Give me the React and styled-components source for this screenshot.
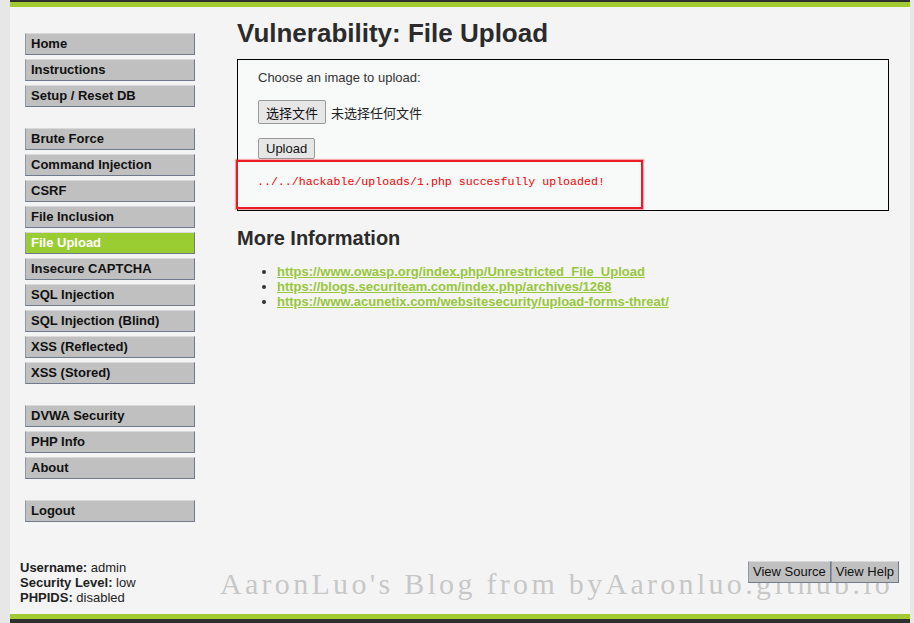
import React from 'react'
import styled, { createGlobalStyle } from 'styled-components'

const GlobalStyle = createGlobalStyle`
  html, body {
    margin: 0;
    padding: 0;
    background: #e7e7e7;
  }
  body {
    font-family: 'Liberation Sans', Arial, sans-serif;
    font-size: 13px;
    color: #000;
  }
`;

const Page = styled.div`
  width: 900px;
  height: 623px;
  margin-left: 10px;
  background: #f4f4f4;
  display: flex;
  flex-direction: column;
  position: relative;
`;

const Header = styled.div`
  height: 2px;
  background: #2f2f2f;
  border-bottom: 5px solid #a2cb33;
`;

const Footer = styled.div`
  height: 4px;
  background: #2f2f2f;
  border-top: 5px solid #a2cb33;
`;

const Body = styled.div`
  flex: 1;
  display: flex;
`;

const Sidebar = styled.div`
  width: 170px;
  padding: 26px 0 0 15px;
  display: flex;
  flex-direction: column;
`;

const MenuGroup = styled.div`
  display: flex;
  flex-direction: column;
  gap: 4px;
  margin-bottom: 21px;
`;

const MenuItem = styled.div`
  height: 20px;
  line-height: 20px;
  padding-left: 5px;
  background: ${p => (p.$active ? '#9acd32' : '#c0c0c0')};
  color: ${p => (p.$active ? '#fff' : '#111')};
  font-weight: bold;
  font-size: 13px;
  border: 1px solid;
  border-color: #d9d9d9 #6f7a8c #6f7a8c #8f98a8;
`;

const Main = styled.div`
  flex: 1;
  padding: 11px 21px 0 42px;
`;

const Title = styled.h1`
  margin: 0 0 11px;
  font-size: 26px;
  line-height: 30px;
  font-weight: bold;
  color: #2b2b2b;
`;

const Box = styled.div`
  position: relative;
  height: 140px;
  border: 1px solid #000;
  background: #f8f9f9;
  padding: 10px 20px 0;
`;

const Label = styled.div`
  font-size: 13px;
  line-height: 15px;
  color: #333;
`;

const FileRow = styled.div`
  display: flex;
  align-items: center;
  gap: 5px;
  margin-top: 15px;
  font-family: 'Liberation Sans', 'Noto Sans CJK SC', sans-serif;
  font-size: 13px;
  color: #222;
`;

const FormButton = styled.div`
  height: ${p => p.$h}px;
  padding: 0 ${p => p.$px}px;
  display: flex;
  align-items: center;
  background: #e6e6e6;
  border: 1px solid #9a9a9a;
  border-radius: 2px;
  color: #111;
  font-family: 'Liberation Sans', 'Noto Sans CJK SC', sans-serif;
  font-size: 13px;
`;

const UploadRow = styled.div`
  display: flex;
  margin-top: 14px;
`;

const Message = styled.pre`
  margin: 15px 0 0 -1px;
  font-family: 'Liberation Mono', monospace;
  font-size: 11.6px;
  line-height: 15px;
  color: #f00000;
`;

const Annotation = styled.div`
  position: absolute;
  left: -2px;
  top: 100px;
  width: 403px;
  height: 45px;
  border: 2px solid #ec1c24;
  box-shadow: 0 0 1px 1px rgba(236, 28, 36, 0.35);
`;

const SubTitle = styled.h2`
  margin: 15px 0 0;
  font-size: 20px;
  line-height: 24px;
  font-weight: bold;
  color: #2b2b2b;
`;

const LinkList = styled.ul`
  margin: 14px 0 0;
  padding-left: 40px;
  font-size: 13px;
  line-height: 15px;
  color: #333;
`;

const Link = styled.a`
  color: #98c73c;
  font-weight: bold;
  text-decoration: underline;
`;

const Bottom = styled.div`
  display: flex;
  justify-content: space-between;
  align-items: flex-start;
  padding: 0 11px 9px 10px;
`;

const UserInfo = styled.div`
  font-size: 13px;
  line-height: 15px;
  color: #222;
  b { font-weight: bold; }
`;

const HelpButtons = styled.div`
  display: flex;
  margin-top: 1px;
  position: relative;
  z-index: 2;
`;

const HelpButton = styled.div`
  height: 20px;
  line-height: 20px;
  padding: 0 4px;
  background: #c0c0c0;
  border: 1px solid;
  border-color: #d9d9d9 #6f7a8c #6f7a8c #8f98a8;
  font-size: 13px;
  color: #111;
`;

const Watermark = styled.div`
  position: absolute;
  left: 210px;
  top: 567px;
  font-family: 'Liberation Serif', serif;
  font-size: 30px;
  letter-spacing: 3.3px;
  color: rgba(160, 160, 160, 0.55);
  white-space: nowrap;
  z-index: 1;
  pointer-events: none;
`;

const menuGroups = [
  ['Home', 'Instructions', 'Setup / Reset DB'],
  ['Brute Force', 'Command Injection', 'CSRF', 'File Inclusion', 'File Upload', 'Insecure CAPTCHA', 'SQL Injection', 'SQL Injection (Blind)', 'XSS (Reflected)', 'XSS (Stored)'],
  ['DVWA Security', 'PHP Info', 'About'],
  ['Logout'],
];

const links = [
  'https://www.owasp.org/index.php/Unrestricted_File_Upload',
  'https://blogs.securiteam.com/index.php/archives/1268',
  'https://www.acunetix.com/websitesecurity/upload-forms-threat/',
];

function App() {
  return (
    <>
      <GlobalStyle />
      <Page>
        <Header />
        <Body>
          <Sidebar>
            {menuGroups.map((group, i) => (
              <MenuGroup key={i}>
                {group.map(item => (
                  <MenuItem key={item} $active={item === 'File Upload'}>{item}</MenuItem>
                ))}
              </MenuGroup>
            ))}
          </Sidebar>
          <Main>
            <Title>Vulnerability: File Upload</Title>
            <Box>
              <Label>Choose an image to upload:</Label>
              <FileRow>
                <FormButton $h={22} $px={7}>选择文件</FormButton>
                <span>未选择任何文件</span>
              </FileRow>
              <UploadRow>
                <FormButton $h={19} $px={7}>Upload</FormButton>
              </UploadRow>
              <Message>../../hackable/uploads/1.php succesfully uploaded!</Message>
              <Annotation />
            </Box>
            <SubTitle>More Information</SubTitle>
            <LinkList>
              {links.map(l => (
                <li key={l}><Link href="#">{l}</Link></li>
              ))}
            </LinkList>
          </Main>
        </Body>
        <Bottom>
          <UserInfo>
            <div><b>Username:</b> admin</div>
            <div><b>Security Level:</b> low</div>
            <div><b>PHPIDS:</b> disabled</div>
          </UserInfo>
          <HelpButtons>
            <HelpButton>View Source</HelpButton>
            <HelpButton>View Help</HelpButton>
          </HelpButtons>
        </Bottom>
        <Watermark>AaronLuo's Blog from byAaronluo.github.io</Watermark>
        <Footer />
      </Page>
    </>
  )
}

export default App
